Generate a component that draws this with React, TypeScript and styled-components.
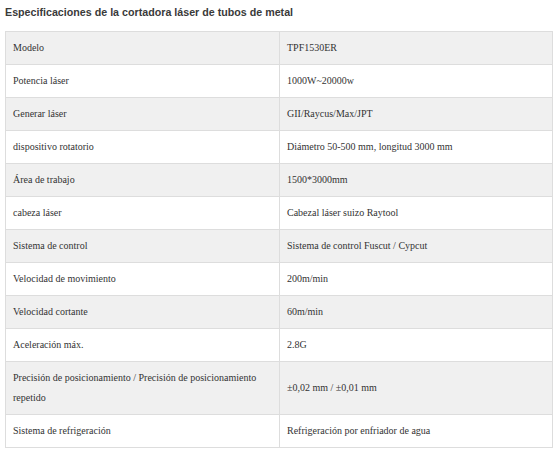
import styled, { createGlobalStyle } from "styled-components";

const GlobalStyle = createGlobalStyle`
  body {
    margin: 0;
    background: #ffffff;
  }
`;

const specs: [string, string][] = [
  ["Modelo", "TPF1530ER"],
  ["Potencia láser", "1000W~20000w"],
  ["Generar láser", "GII/Raycus/Max/JPT"],
  ["dispositivo rotatorio", "Diámetro 50-500 mm, longitud 3000 mm"],
  ["Área de trabajo", "1500*3000mm"],
  ["cabeza láser", "Cabezal láser suizo Raytool"],
  ["Sistema de control", "Sistema de control Fuscut / Cypcut"],
  ["Velocidad de movimiento", "200m/min"],
  ["Velocidad cortante", "60m/min"],
  ["Aceleración máx.", "2.8G"],
  [
    "Precisión de posicionamiento / Precisión de posicionamiento repetido",
    "±0,02 mm / ±0,01 mm",
  ],
  ["Sistema de refrigeración", "Refrigeración por enfriador de agua"],
];

const App = () => {
  return (
    <Wrapper>
      <GlobalStyle />
      <Title>Especificaciones de la cortadora láser de tubos de metal</Title>
      <SpecTable>
        <colgroup>
          <LabelCol />
          <col />
        </colgroup>
        <tbody>
          {specs.map(([label, value]) => (
            <Row key={label}>
              <Cell>{label}</Cell>
              <Cell>{value}</Cell>
            </Row>
          ))}
        </tbody>
      </SpecTable>
    </Wrapper>
  );
};

const Wrapper = styled.div`
  padding: 7px 7px 0 5px;
`;

const Title = styled.h3`
  margin: 0 0 13px;
  font-family: "Liberation Sans", Arial, sans-serif;
  font-size: 10.7px;
  font-weight: 700;
  line-height: 11px;
  color: #3a3a3a;
`;

const SpecTable = styled.table`
  width: 548px;
  table-layout: fixed;
  border-collapse: collapse;
  border: 1px solid #dddddd;
  font-family: "Liberation Serif", "Times New Roman", serif;
  font-size: 10px;
  color: #333333;
`;

const LabelCol = styled.col`
  width: 274px;
`;

const Row = styled.tr`
  background: #ffffff;

  &:nth-child(odd) {
    background: #f0f0f0;
  }
`;

const Cell = styled.td`
  padding: 6px 7px 6px 7px;
  line-height: 20px;
  border: 1px solid #dddddd;
  vertical-align: middle;
`;

export default App;
